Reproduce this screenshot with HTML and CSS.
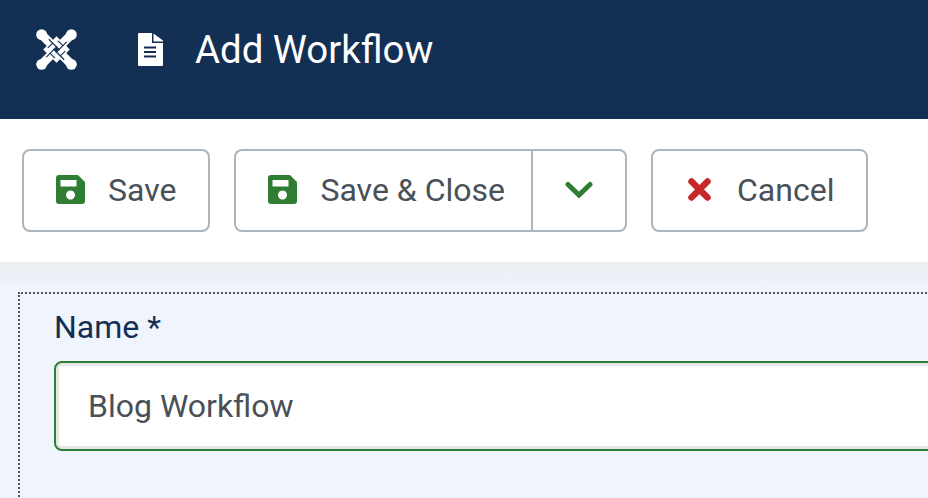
FILE: index.html
```html
<!DOCTYPE html>
<html lang="en">
<head>
    <meta charset="UTF-8" />
    <meta name="viewport" content="width=device-width, initial-scale=1.0"/>
    <title>Add Workflow</title>
    <link rel="stylesheet" href="styles.css">
</head>
<body>
    <header class="top-container">
        <svg class="logo" viewBox="0 0 40 40" aria-label="Joomla logo">
            <defs>
                <g id="logo-arm">
                    <circle class="logo-ball" cx="5.500" cy="5.500" r="5.300"/>
                    <path class="logo-stub" d="M5.500 5.500 L14 14"/>
                    <path class="logo-gap" d="M23 20.500 L12.500 10"/>
                    <path class="logo-gap" d="M11.500 18.500 L16.500 13.500"/>
                </g>
            </defs>
            <path class="logo-ball" d="M20 7 L33 20 L20 33 L7 20 Z"/>
            <use href="#logo-arm"/>
            <use href="#logo-arm" transform="rotate(90 20 20)"/>
            <use href="#logo-arm" transform="rotate(180 20 20)"/>
            <use href="#logo-arm" transform="rotate(270 20 20)"/>
            <path class="logo-hole" d="M20 17.500 L22.500 20 L20 22.500 L17.500 20 Z"/>
        </svg>
        <svg class="page-icon" viewBox="0 0 25 33">
            <path class="page-sheet" d="M1 0 H14 V10 H25 V32 a1 1 0 0 1 -1 1 H1 a1 1 0 0 1 -1 -1 V1 a1 1 0 0 1 1 -1 Z M15.500 0.500 L25 7.500 V8.500 H15.500 Z"/>
            <path class="page-lines" d="M6 14.500 H18 M6 19 H18 M6 23.500 H18"/>
        </svg>
        <h1 class="page-title">Add Workflow</h1>
    </header>

    <div class="toolbar">
        <button class="btn" type="button">
            <svg class="btn-icon" viewBox="0 0 29 29"><path class="icon-save" fill-rule="evenodd" d="M3 0 H22 L29 7 V26 a3 3 0 0 1 -3 3 H3 a3 3 0 0 1 -3 -3 V3 a3 3 0 0 1 3 -3 Z M4.500 5 V11.500 H20.500 V5 Z M14.500 15.500 a4.500 4.500 0 1 0 0.010 0 Z"/></svg>
            Save
        </button>
        <div class="btn-group">
            <button class="btn btn-main" type="button">
                <svg class="btn-icon" viewBox="0 0 29 29"><path class="icon-save" fill-rule="evenodd" d="M3 0 H22 L29 7 V26 a3 3 0 0 1 -3 3 H3 a3 3 0 0 1 -3 -3 V3 a3 3 0 0 1 3 -3 Z M4.500 5 V11.500 H20.500 V5 Z M14.500 15.500 a4.500 4.500 0 1 0 0.010 0 Z"/></svg>
                Save &amp; Close
            </button>
            <button class="btn btn-toggle" type="button" aria-label="More save options">
                <svg class="chevron" viewBox="0 0 28 18"><path d="M3 3.500 L14 14 L25 3.500"/></svg>
            </button>
        </div>
        <button class="btn" type="button">
            <svg class="btn-icon btn-icon-cancel" viewBox="0 0 29 29"><path d="M6.500 6.500 L22.500 22.500 M22.500 6.500 L6.500 22.500"/></svg>
            Cancel
        </button>
    </div>

    <div class="content-wrap">
        <section class="section-form">
            <label class="field-label" for="wf-name">Name *</label>
            <input class="field-input" id="wf-name" type="text" value="Blog Workflow">
        </section>
    </div>
</body>
</html>
```

FILE: styles.css
```css
:root {
    --header-color: #132f53;
    --success-color: #2e7d32;
    --error-color: #c52827;
    --text-color: #495057;
    --border-color: #adb5bd;
    --page-color: #f0f4fc;
}
html, body {
    height: 100%;
}
body {
    font-family: 'Roboto', sans-serif;
    background-color: var(--page-color);
    margin: 0;
    overflow: hidden;
}
.top-container {
    display: flex;
    align-items: center;
    background-color: var(--header-color);
    height: 119px;
    padding: 0 0 20px 36px;
    box-sizing: border-box;
}
.logo {
    width: 41px;
    height: 41px;
}
.logo-ball { fill: white; }
.logo-stub {
    fill: none;
    stroke: white;
    stroke-width: 8.500;
}
.logo-gap {
    fill: none;
    stroke: var(--header-color);
    stroke-width: 1.100;
}
.logo-hole { fill: var(--header-color); }
.page-icon {
    width: 25px;
    height: 33px;
    margin-left: 61px;
}
.page-sheet { fill: white; }
.page-lines {
    stroke: var(--header-color);
    stroke-width: 1.800;
}
.page-title {
    margin: 0 0 0 32px;
    color: white;
    font-size: 38.400px;
    font-weight: 400;
}
.toolbar {
    display: flex;
    gap: 24px;
    background-color: white;
    padding: 30px 22px;
    height: 143px;
    box-sizing: border-box;
}
.btn {
    display: flex;
    align-items: center;
    height: 83px;
    padding: 0 32px 2px;
    background-color: white;
    border: 2px solid var(--border-color);
    border-radius: 8px;
    color: var(--text-color);
    font-family: inherit;
    font-size: 32px;
}
.btn-icon {
    width: 29px;
    height: 29px;
    margin-right: 23px;
}
.btn-icon-cancel {
    stroke: var(--error-color);
    stroke-width: 6.500;
    stroke-linecap: round;
}
.icon-save { fill: var(--success-color); }
.btn-group { display: flex; }
.btn-main {
    border-radius: 8px 0 0 8px;
    border-right: none;
    padding-right: 26px;
}
.btn-toggle {
    border-radius: 0 8px 8px 0;
    padding: 0 32px 2px;
}
.chevron {
    width: 28px;
    height: 18px;
    fill: none;
    stroke: var(--success-color);
    stroke-width: 5;
    stroke-linecap: round;
}
.content-wrap {
    height: 236px;
    padding: 30px 0 0 18px;
    background-image: linear-gradient(#e9ecf0, var(--page-color) 28px);
    box-sizing: border-box;
}
.section-form {
    width: 1200px;
    height: 400px;
    padding: 14px 34px;
    border: 2px dotted #555;
    box-sizing: border-box;
}
.field-label {
    display: block;
    color: var(--header-color);
    font-size: 32px;
    line-height: 38px;
    margin-bottom: 15px;
}
.field-input {
    display: block;
    width: 1000px;
    height: 90px;
    padding: 0 32px;
    box-sizing: border-box;
    background-color: white;
    border: 2px solid var(--success-color);
    border-radius: 8px;
    box-shadow: inset 0 0 0 3px #e6e6e6;
    color: var(--text-color);
    font-family: inherit;
    font-size: 32px;
}
```
